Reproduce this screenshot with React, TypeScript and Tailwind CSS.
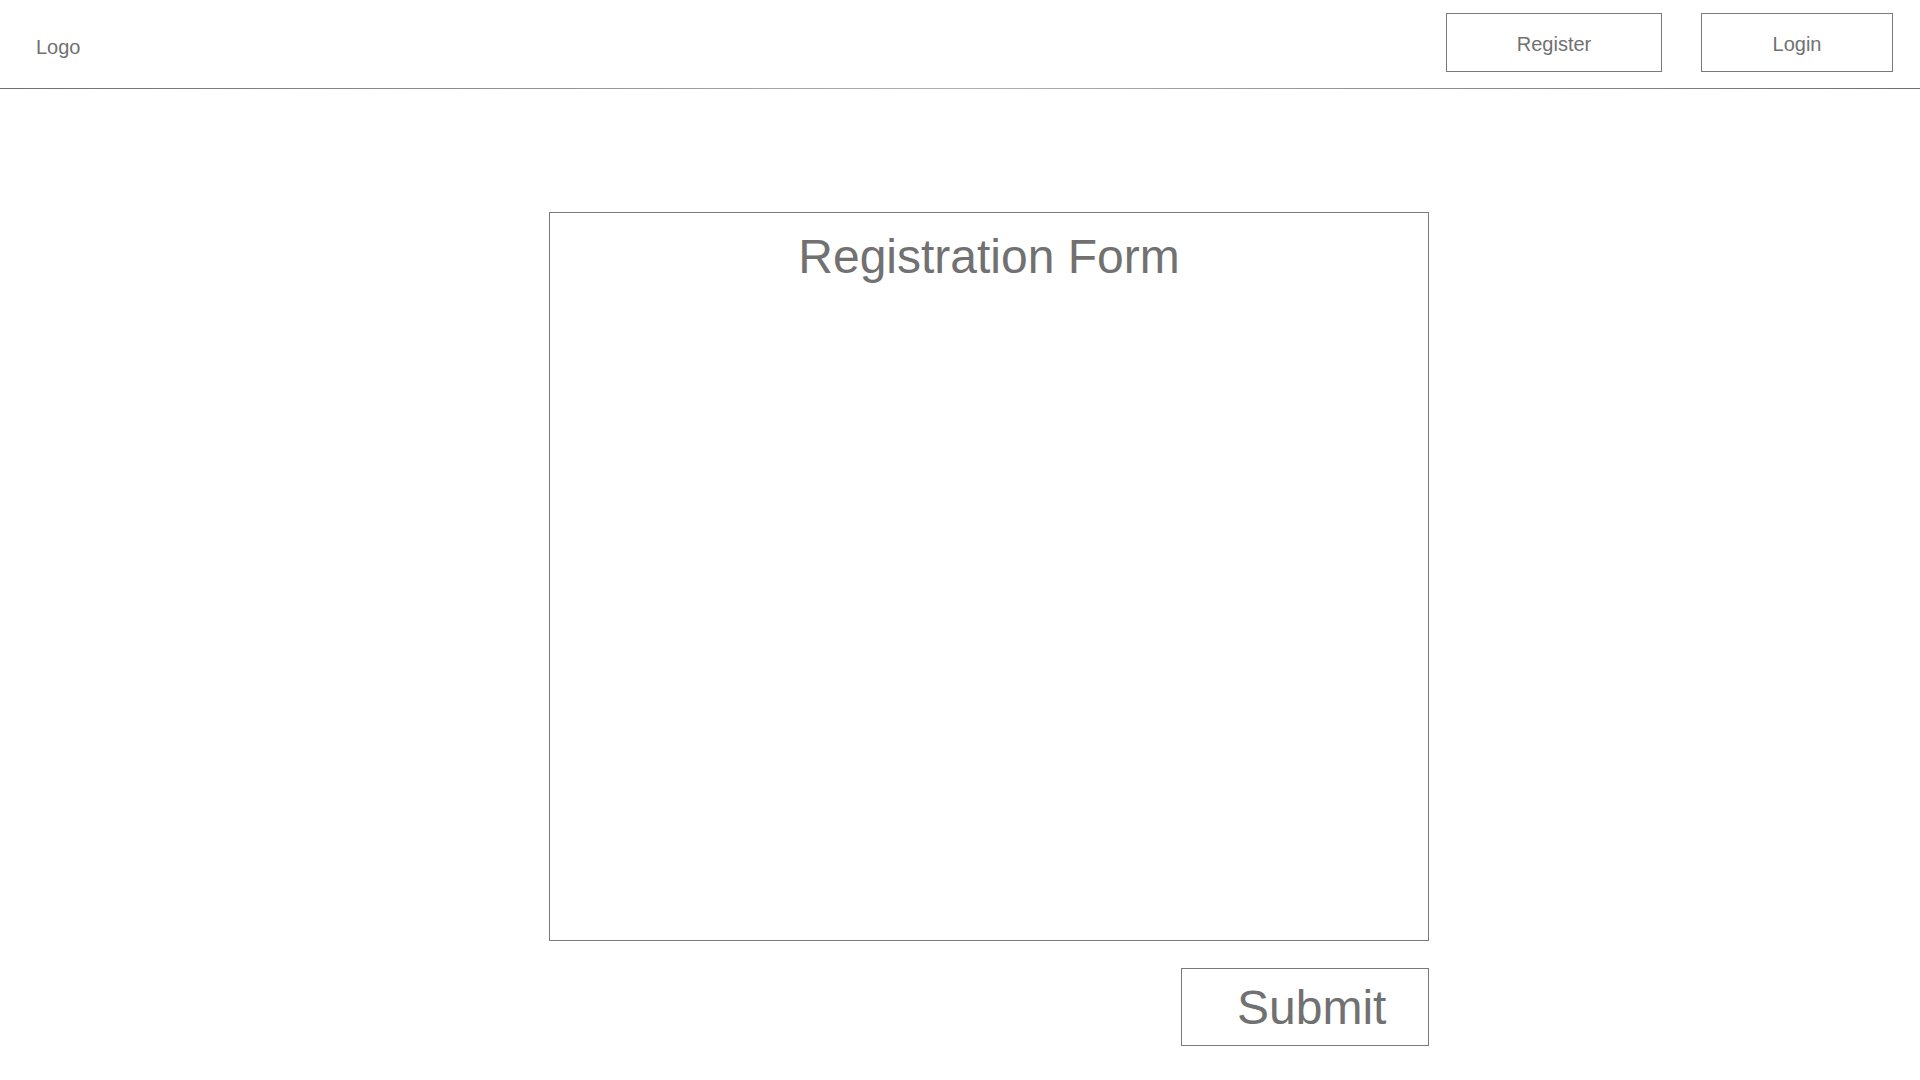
export default function App() {
  return (
    <div
      className="w-[1920px] h-[1080px] bg-white text-[#717171] overflow-hidden"
      style={{ fontFamily: '"Liberation Sans", Arial, sans-serif' }}
    >
      <header className="h-[88px] flex items-start justify-between">
        <div className="pl-[36px] pt-[37px] text-[20px] leading-[20px]">Logo</div>
        <div className="flex items-start gap-[39px] pt-[13px] pr-[27px]">
          <button className="w-[216px] h-[59px] border border-[#7a7a7a] text-[20px] leading-[20px] text-[#717171] flex items-center justify-center pt-[2px] bg-white">
            Register
          </button>
          <button className="w-[192px] h-[59px] border border-[#7a7a7a] text-[20px] leading-[20px] text-[#717171] flex items-center justify-center pt-[2px] bg-white">
            Login
          </button>
        </div>
      </header>
      <div className="h-px bg-gradient-to-r from-[#6f6f6f] via-[#b0b0b0] to-[#6f6f6f]" />
      <main className="pl-[549px] pt-[123px] flex flex-col items-start">
        <section className="w-[880px] h-[729px] border border-[#7a7a7a] flex flex-col items-center pt-[20px]">
          <h1 className="text-[48px] leading-[48px] font-normal text-[#717171]">Registration Form</h1>
        </section>
        <div className="w-[880px] flex justify-end mt-[27px]">
          <button className="w-[248px] h-[78px] border border-[#7a7a7a] bg-white text-[48px] leading-[48px] text-[#717171] flex items-center pl-[55px] pt-[1px]">
            Submit
          </button>
        </div>
      </main>
    </div>
  );
}
